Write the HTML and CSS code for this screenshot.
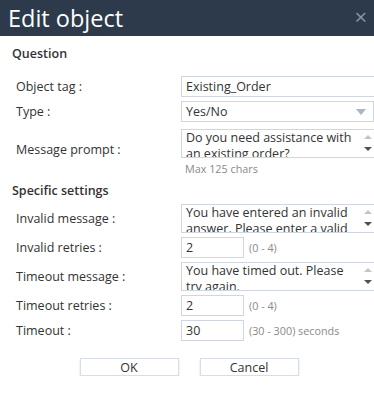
FILE: index.html
```html
<!DOCTYPE html>
<html lang="en">
<head>
    <meta charset="UTF-8">
    <title>Edit object</title>
    <link rel="stylesheet" href="styles.css">
</head>
<body>
    <div class="dialog">
        <div class="dialog-header">
            <span class="dialog-title">Edit object</span>
            <span class="close">&times;</span>
        </div>

        <div class="dialog-body">
            <div class="section-title">Question</div>
            <div class="form-grid">
                <label for="objectTag">Object tag :</label>
                <input type="text" id="objectTag" value="Existing_Order">

                <label for="type">Type :</label>
                <div class="select">
                    <span>Yes/No</span>
                    <svg width="10" height="6" viewBox="0 0 10 6"><path d="M0 0h10L5 6z" fill="#a3b8cf"/></svg>
                </div>

                <label for="prompt" class="label-low">Message prompt :</label>
                <div class="textbox first">
                    <textarea id="prompt">Do you need assistance with an existing order?</textarea>
                    <div class="scrollbar"><span class="arrow up"></span><span class="arrow down"></span></div>
                </div>

                <span></span>
                <span class="hint hint-max">Max 125 chars</span>
            </div>

            <div class="section-title second">Specific settings</div>
            <div class="form-grid">
                <label for="invalidMsg">Invalid message :</label>
                <div class="textbox">
                    <textarea id="invalidMsg">You have entered an invalid answer. Please enter a valid answer.</textarea>
                    <div class="scrollbar"><span class="arrow up"></span><span class="arrow down"></span></div>
                </div>

                <label for="invalidRetries">Invalid retries :</label>
                <div class="inline">
                    <input type="text" id="invalidRetries" class="small" value="2">
                    <span class="hint">(0 - 4)</span>
                </div>

                <label for="timeoutMsg">Timeout message :</label>
                <div class="textbox">
                    <textarea id="timeoutMsg">You have timed out. Please try again.</textarea>
                    <div class="scrollbar"><span class="arrow up"></span><span class="arrow down"></span></div>
                </div>

                <label for="timeoutRetries">Timeout retries :</label>
                <div class="inline">
                    <input type="text" id="timeoutRetries" class="small" value="2">
                    <span class="hint">(0 - 4)</span>
                </div>

                <label for="timeout">Timeout :</label>
                <div class="inline">
                    <input type="text" id="timeout" class="small" value="30">
                    <span class="hint">(30 - 300) seconds</span>
                </div>
            </div>

            <div class="buttons">
                <button>OK</button>
                <button>Cancel</button>
            </div>
        </div>
    </div>
</body>
</html>
```

FILE: styles.css
```css
body {
    margin: 0;
    font-family: 'Open Sans', 'Noto Sans', sans-serif;
    color: #333;
    background: #fff;
    overflow: hidden;
}

.dialog {
    width: 374px;
    overflow: hidden;
}

.dialog-header {
    height: 36px;
    background-color: #2c3a4b;
    display: flex;
    align-items: center;
    justify-content: space-between;
    padding: 0 7px 0 8px;
}

.dialog-title {
    color: #fff;
    font-size: 23.5px;
    line-height: 36px;
}

.close {
    color: #8794a6;
    font-size: 22px;
    line-height: 20px;
    margin-top: -4px;
}

.dialog-body {
    padding: 9px 0 0 12px;
}

.section-title {
    font-weight: 600;
    font-size: 12.5px;
    line-height: 18px;
    margin-bottom: 13px;
}

.section-title.second {
    margin-top: 6px;
    margin-bottom: 4px;
}

.form-grid {
    display: grid;
    grid-template-columns: 169px 200px;
    row-gap: 4px;
    align-items: center;
}

label {
    font-size: 12.5px;
    padding-left: 4px;
}

.label-low {
    margin-top: 14px;
}

input, textarea, .select, .textbox {
    box-sizing: border-box;
    font-family: inherit;
    font-size: 12.5px;
    color: #333;
    border: 1px solid #cfd6e0;
    border-radius: 0;
    background: #fff;
    margin: 0;
    outline: none;
}

input {
    height: 21px;
    padding: 0 4px;
    width: 200px;
}

.select {
    height: 21px;
    width: 193px;
    padding: 0 7px 0 4px;
    display: flex;
    align-items: center;
    justify-content: space-between;
    line-height: 19px;
}

.textbox {
    height: 29px;
    width: 194px;
    display: flex;
    overflow: hidden;
}

.textbox.first {
    margin-top: 3px;
}

.textbox textarea {
    flex: 1;
    border: none;
    height: 27px;
    padding: 0 0 0 4px;
    line-height: 16px;
    resize: none;
    overflow: hidden;
}

.scrollbar {
    width: 13px;
    display: flex;
    flex-direction: column;
    justify-content: space-between;
    align-items: center;
    padding: 5px 0 6px;
}

.arrow {
    width: 0;
    height: 0;
    border-left: 4px solid transparent;
    border-right: 4px solid transparent;
}

.arrow.up {
    border-bottom: 4px solid #c4c4c4;
}

.arrow.down {
    border-top: 4px solid #505050;
}

.inline {
    display: flex;
    align-items: center;
    gap: 5px;
}

input.small {
    width: 63px;
}

.hint {
    font-size: 10.8px;
    color: #8a8a8a;
}

.hint-max {
    margin-top: -1px;
    padding-left: 4px;
}

.buttons {
    display: flex;
    justify-content: center;
    gap: 21px;
    margin-top: 17px;
    padding-right: 8px;
}

button {
    width: 99px;
    height: 18px;
    font-family: inherit;
    font-size: 12.5px;
    color: #333;
    background: #fff;
    border: 1px solid #d8dee8;
    box-shadow: 0 2px 2px rgba(160, 175, 200, 0.4);
    padding: 0;
    line-height: 15px;
}
```
